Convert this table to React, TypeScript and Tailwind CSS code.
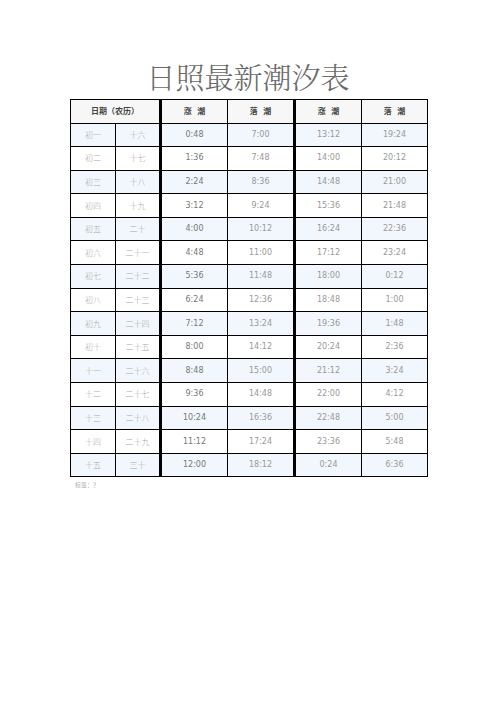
const rows: string[][] = [
  ["初一", "十六", "0:48", "7:00", "13:12", "19:24"],
  ["初二", "十七", "1:36", "7:48", "14:00", "20:12"],
  ["初三", "十八", "2:24", "8:36", "14:48", "21:00"],
  ["初四", "十九", "3:12", "9:24", "15:36", "21:48"],
  ["初五", "二十", "4:00", "10:12", "16:24", "22:36"],
  ["初六", "二十一", "4:48", "11:00", "17:12", "23:24"],
  ["初七", "二十二", "5:36", "11:48", "18:00", "0:12"],
  ["初八", "二十三", "6:24", "12:36", "18:48", "1:00"],
  ["初九", "二十四", "7:12", "13:24", "19:36", "1:48"],
  ["初十", "二十五", "8:00", "14:12", "20:24", "2:36"],
  ["十一", "二十六", "8:48", "15:00", "21:12", "3:24"],
  ["十二", "二十七", "9:36", "14:48", "22:00", "4:12"],
  ["十三", "二十八", "10:24", "16:36", "22:48", "5:00"],
  ["十四", "二十九", "11:12", "17:24", "23:36", "5:48"],
  ["十五", "三十", "12:00", "18:12", "0:24", "6:36"],
]

const cjk = { fontFamily: '"Noto Sans CJK SC", sans-serif' }
const num = { fontFamily: '"DejaVu Sans", "Noto Sans CJK SC", sans-serif' }

export default function App() {
  return (
    <div className="w-[496px] h-[702px] bg-white">
      <div className="pt-[58px] h-[99px] flex justify-center">
        <h1
          className="text-[29px] leading-[38px] font-light text-[#6a6a6a]"
          style={{ fontFamily: '"Noto Serif CJK SC", "Noto Sans CJK SC", serif' }}
        >
          日照最新潮汐表
        </h1>
      </div>

      <div className="pl-[70px]">
        <table className="w-[357px] border-collapse table-fixed border border-black">
          <colgroup>
            <col className="w-[45px]" />
            <col className="w-[45px]" />
            <col className="w-[67px]" />
            <col className="w-[67px]" />
            <col className="w-[67px]" />
            <col className="w-[66px]" />
          </colgroup>
          <thead>
            <tr className="h-[23.5px] bg-[#f7f7f7] text-[8px] text-[#444]" style={cjk}>
              <th colSpan={2} className="border border-black border-r-[3px] p-0 font-bold">日期（农历）</th>
              <th className="border border-black p-0 font-bold">涨&nbsp;&nbsp;&nbsp;潮</th>
              <th className="border border-black border-r-[3px] p-0 font-bold">落&nbsp;&nbsp;&nbsp;潮</th>
              <th className="border border-black p-0 font-bold">涨&nbsp;&nbsp;&nbsp;潮</th>
              <th className="border border-black p-0 font-bold">落&nbsp;&nbsp;&nbsp;潮</th>
            </tr>
          </thead>
          <tbody>
            {rows.map((r, i) => (
              <tr key={r[0]} className={`h-[23.6px] ${i % 2 === 0 ? "bg-[#f1f7fc]" : "bg-white"}`}>
                <td className="border border-black p-0 text-center text-[8px] font-light text-[#aaa]" style={cjk}>{r[0]}</td>
                <td className="border border-black border-r-[3px] p-0 text-center text-[8px] font-light text-[#aaa]" style={cjk}>{r[1]}</td>
                <td className="border border-black p-0 text-center text-[8px] text-[#777]" style={num}>{r[2]}</td>
                <td className="border border-black border-r-[3px] p-0 text-center text-[8px] text-[#999]" style={num}>{r[3]}</td>
                <td className="border border-black p-0 text-center text-[8px] text-[#999]" style={num}>{r[4]}</td>
                <td className="border border-black p-0 text-center text-[8px] text-[#999]" style={num}>{r[5]}</td>
              </tr>
            ))}
          </tbody>
        </table>
        <p className="pt-[3px] pl-[5px] text-[6px] text-[#aaa]" style={cjk}>标签：？</p>
      </div>
    </div>
  )
}
